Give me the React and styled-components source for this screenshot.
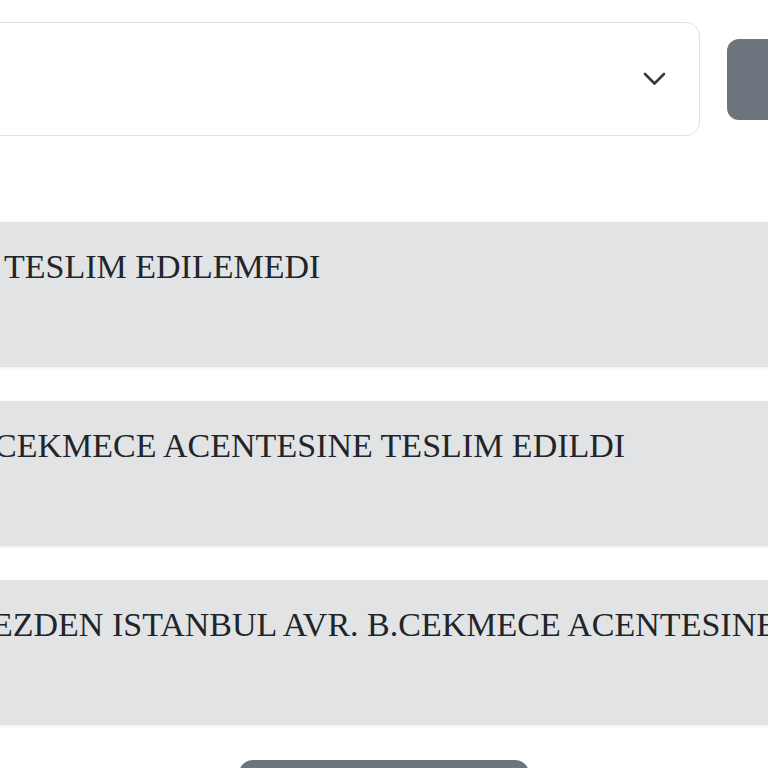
import React from 'react';
import styled, { createGlobalStyle } from 'styled-components';

const GlobalStyle = createGlobalStyle`
  html, body {
    margin: 0;
    padding: 0;
    background: #fff;
    overflow: hidden;
  }
  body {
    width: 768px;
    height: 768px;
    font-family: 'Liberation Serif', 'Times New Roman', serif;
  }
`;

const Page = styled.div`
  display: flex;
  flex-direction: column;
  padding-top: 22px;
  width: 768px;
`;

const FilterBar = styled.div`
  display: flex;
  align-items: center;
  gap: 27px;
  margin-left: -40px;
`;

const SelectBox = styled.div`
  flex: none;
  box-sizing: border-box;
  width: 740px;
  height: 114px;
  border: 1.5px solid #dee2e6;
  border-radius: 14px;
  background: #fff;
  display: flex;
  align-items: center;
  justify-content: flex-end;
  padding-right: 33px;
  color: #343a40;
`;

const SearchButton = styled.button`
  flex: none;
  width: 110px;
  height: 81px;
  border: none;
  border-radius: 12px;
  background: #6c757d;
`;

const StatusList = styled.div`
  display: flex;
  flex-direction: column;
  gap: 34px;
  margin-top: 86px;
  margin-left: -40px;
  width: 860px;
`;

const StatusRow = styled.div`
  box-sizing: border-box;
  height: 145px;
  background: #e2e3e5;
  padding: 26px 0 0 40px;
  box-shadow: 0 1px 3px rgba(0, 0, 0, 0.08);
  overflow: hidden;
`;

const StatusText = styled.div`
  margin-left: ${(p) => p.$indent}px;
  font-family: 'Liberation Serif', 'Times New Roman', serif;
  font-size: 34px;
  line-height: normal;
  color: #212529;
  white-space: nowrap;
`;

const Footer = styled.div`
  display: flex;
  justify-content: center;
  margin-top: 35px;
`;

const MoreButton = styled.button`
  width: 290px;
  height: 80px;
  border: none;
  border-radius: 14px;
  background: #6c757d;
`;

const Chevron = () => (
  <svg width="23" height="14" viewBox="0 0 23 14" fill="none">
    <polyline
      points="2 2 11.5 11.5 21 2"
      stroke="currentColor"
      strokeWidth="2.6"
      strokeLinecap="round"
      strokeLinejoin="round"
    />
  </svg>
);

const rows = [
  { indent: 4, text: 'TESLIM EDILEMEDI' },
  { indent: -6, text: 'CEKMECE ACENTESINE TESLIM EDILDI' },
  { indent: -8, text: 'EZDEN ISTANBUL AVR. B.CEKMECE ACENTESINE GONDERILDI' },
];

const App = () => {
  return (
    <>
      <GlobalStyle />
      <Page>
        <FilterBar>
          <SelectBox>
            <Chevron />
          </SelectBox>
          <SearchButton />
        </FilterBar>

        <StatusList>
          {rows.map((r) => (
            <StatusRow key={r.text}>
              <StatusText $indent={r.indent}>{r.text}</StatusText>
            </StatusRow>
          ))}
        </StatusList>

        <Footer>
          <MoreButton />
        </Footer>
      </Page>
    </>
  );
};

export default App;
